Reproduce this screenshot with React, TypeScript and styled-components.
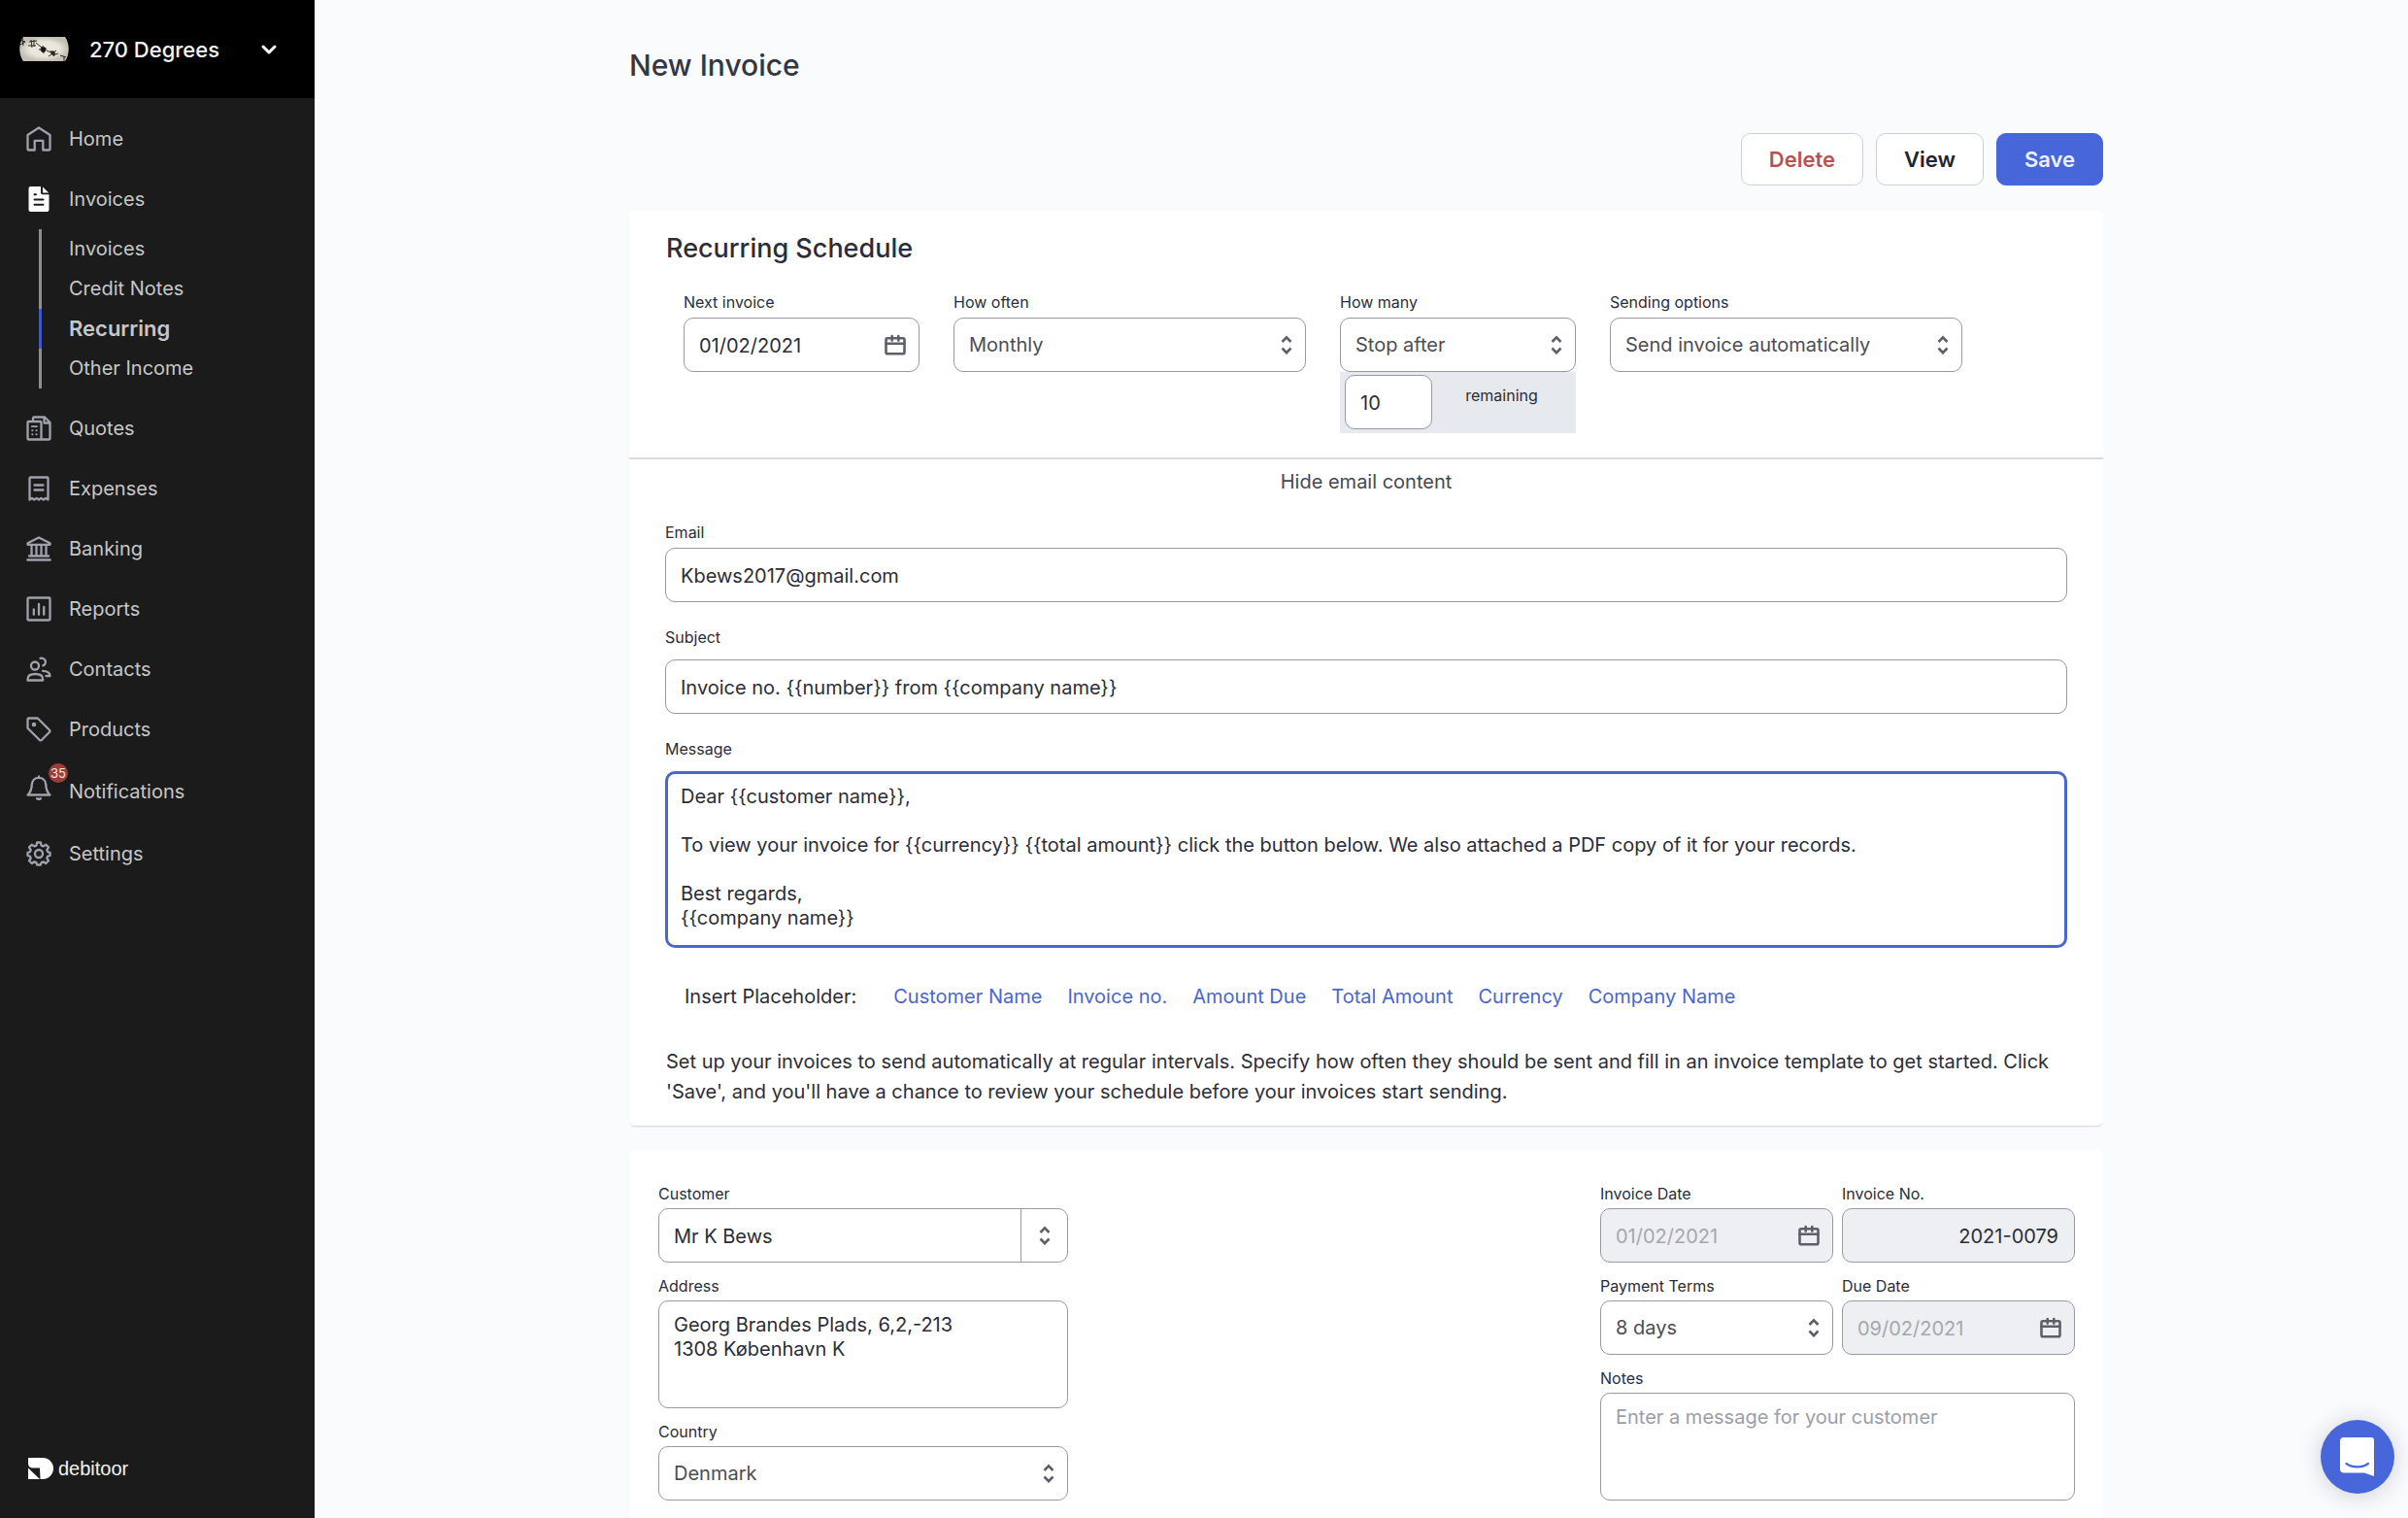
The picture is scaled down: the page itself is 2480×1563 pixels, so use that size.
import React, { useId } from "react";
import styled, { createGlobalStyle, css } from "styled-components";

const color = {
  page: "#fafbfd",
  card: "#ffffff",
  ink: "#2b2d38",
  soft: "#4b4d54",
  line: "#979aa2",
  hairline: "#d9dadc",
  muted: "#a5a7ac",
  blue: "#4766da",
  link: "#4a67cc",
  red: "#b9524f",
  sidebar: "#1b1b1b",
  navText: "#c6c7c8",
  navIcon: "#9fa1ac",
  disabled: "#eeeff2",
};

const GlobalStyle = createGlobalStyle`
  *, *::before, *::after { box-sizing: border-box; }
  body { margin: 0; background: ${color.page}; }
  body, button, input, select, textarea {
    font-family: Inter, "Liberation Sans", sans-serif;
    font-size: 20px;
    color: ${color.ink};
  }
`;

/* ---------- shell ---------- */

const Shell = styled.div`
  display: flex;
  height: 100vh;
  overflow: hidden;
`;

const Sidebar = styled.aside`
  flex: 0 0 324px;
  display: flex;
  flex-direction: column;
  background: ${color.sidebar};
`;

const AccountButton = styled.button`
  display: flex;
  align-items: center;
  gap: 21px;
  height: 101px;
  padding: 0 38px 0 20px;
  border: 0;
  background: #000;
  color: #f4f4f4;
  font-size: 22px;
  font-weight: 500;
  text-align: left;
  svg:last-child { margin-left: auto; }
`;

const Nav = styled.nav`
  flex: 1;
  padding-top: 11px;
`;

const NavLink = styled.a<{ $tall?: boolean }>`
  display: flex;
  align-items: center;
  gap: 18px;
  height: ${(p) => (p.$tall ? 66 : 62)}px;
  padding-left: 27px;
  color: ${color.navText};
  text-decoration: none;
`;

const NavIcon = styled.span<{ $active?: boolean; $raised?: boolean }>`
  position: relative;
  display: flex;
  color: ${(p) => (p.$active ? "#fbfbfd" : color.navIcon)};
  padding-bottom: ${(p) => (p.$raised ? 8 : 0)}px;
`;

const Badge = styled.span`
  position: absolute;
  left: 23px;
  top: -12px;
  width: 20px;
  height: 20px;
  border-radius: 10px;
  background: #9b3d38;
  color: #f6e6e4;
  font-size: 13px;
  line-height: 20px;
  text-align: center;
`;

const SubNav = styled.div`
  display: flex;
  flex-direction: column;
  margin: 0 0 10px 40px;
`;

const SubLink = styled.a<{ $current?: boolean }>`
  border-left: 3px solid ${(p) => (p.$current ? "#4059c0" : "#8f8f8f")};
  padding-left: 28px;
  line-height: 41px;
  height: 41px;
  color: ${color.navText};
  text-decoration: none;
  ${(p) => p.$current && css`font-size: 22px; font-weight: 600;`}
`;

const Brand = styled.div`
  display: flex;
  align-items: center;
  gap: 5px;
  padding: 0 0 37px 29px;
  color: #f2f2f2;
  font-family: "Liberation Sans", Arial, sans-serif;
  line-height: 28px;
`;

/* ---------- content ---------- */

const Main = styled.main`
  flex: 1;
  overflow-y: auto;
  scrollbar-width: none;
  padding: 49px 40px 0 50px;
`;

const Column = styled.div`
  max-width: 1518px;
  margin: 0 auto;
`;

const Title = styled.h1`
  margin: 0 0 52px;
  font-size: 30px;
  line-height: 36px;
  font-weight: 500;
  color: #343643;
`;

const Actions = styled.div`
  display: flex;
  justify-content: flex-end;
  gap: 13px;
  margin-bottom: 26px;
`;

const ActionButton = styled.button<{ $kind: "danger" | "plain" | "primary" }>`
  height: 54px;
  padding: 0 28px;
  border-radius: 10px;
  border: 1px solid #cdd0da;
  background: #fff;
  font-size: 22px;
  font-weight: 600;
  color: ${(p) => (p.$kind === "danger" ? color.red : "#22242e")};
  ${(p) =>
    p.$kind === "primary" &&
    css`
      border-color: ${color.blue};
      background: ${color.blue};
      color: #eef1fd;
    `}
`;

const Card = styled.section`
  margin-bottom: 25px;
  border-radius: 6px;
  background: ${color.card};
  box-shadow: 0 2px 2px -1px rgba(40, 45, 60, 0.2);
`;

const Schedule = styled.div`
  padding: 23px 38px 25px;
  border-bottom: 2px solid ${color.hairline};
`;

const SectionTitle = styled.h2`
  margin: 0 0 29px;
  font-size: 27px;
  line-height: 32px;
  font-weight: 500;
`;

const ScheduleFields = styled.div`
  display: flex;
  align-items: flex-start;
  gap: 35px;
  padding: 0 18px;
`;

const FieldBox = styled.div<{ $gap: number; $basis?: number }>`
  display: flex;
  flex-direction: column;
  gap: ${(p) => p.$gap}px;
  min-width: 0;
  ${(p) => p.$basis && css`flex: 0 1 ${p.$basis}px;`}
`;

const Label = styled.label`
  font-size: 16px;
  line-height: 20px;
`;

const Control = styled.div`
  position: relative;
  display: flex;
  svg {
    position: absolute;
    top: 0;
    bottom: 0;
    right: 14px;
    margin: auto 0;
    color: #5d606b;
    pointer-events: none;
  }
`;

const frame = css`
  width: 100%;
  min-width: 0;
  margin: 0;
  border: 1px solid ${color.line};
  border-radius: 10px;
  background: #fff;
  outline: 0;
`;

const TextInput = styled.input<{ $end?: boolean }>`
  ${frame}
  height: 56px;
  padding: 2px 16px 0 15px;
  text-align: ${(p) => (p.$end ? "right" : "left")};
  &:read-only { background: ${color.disabled}; }
  &:disabled { background: ${color.disabled}; color: ${color.muted}; }
`;

const Select = styled.select`
  ${frame}
  appearance: none;
  height: 56px;
  padding: 0 36px 0 15px;
  color: ${color.soft};
`;

const TextArea = styled.textarea<{ $height: number; $focused?: boolean }>`
  ${frame}
  display: block;
  height: ${(p) => p.$height}px;
  padding: 12px 15px;
  line-height: 25px;
  resize: none;
  &::placeholder { color: #9b9ea7; opacity: 1; }
  ${(p) =>
    p.$focused &&
    css`
      border: 3px solid ${color.link};
      padding: 11px 13px;
    `}
`;

const Remaining = styled.div`
  display: flex;
  align-items: flex-start;
  padding: 3px 5px 4px;
  background: #e6e9ed;
`;

const CountInput = styled(TextInput)`
  flex: 0 0 90px;
  width: 90px;
`;

const RemainingLabel = styled(Label)`
  flex: 1;
  padding-top: 11px;
  text-align: center;
`;

const HideButton = styled.button`
  display: block;
  margin: 11px auto 30px;
  padding: 0;
  border: 0;
  background: none;
  line-height: 24px;
  color: #444853;
`;

const EmailForm = styled.div`
  display: flex;
  flex-direction: column;
  gap: 26px;
  padding: 0 37px;
`;

const Placeholders = styled.div`
  display: flex;
  gap: 26px;
  margin: 38px 0 40px;
  padding: 0 57px;
  line-height: 24px;
`;

const PlaceholderTitle = styled.span`
  margin-right: 12px;
`;

const PlaceholderButton = styled.button`
  padding: 0;
  border: 0;
  background: none;
  line-height: 24px;
  color: ${color.link};
`;

const HelpText = styled.p`
  margin: 0;
  padding: 0 30px 19px 38px;
  line-height: 31px;
`;

const InvoiceCard = styled(Card)`
  display: flex;
  justify-content: space-between;
  padding: 35px 29px 40px 30px;
`;

const CustomerColumn = styled.div`
  flex: 0 1 422px;
  display: flex;
  flex-direction: column;
  gap: 14px;
`;

const DetailsGrid = styled.div`
  flex: 0 1 489px;
  display: grid;
  grid-template-columns: 1fr 1fr;
  gap: 14px 9px;
  align-content: start;
`;

const Wide = styled.div`
  grid-column: 1 / -1;
`;

const Combo = styled.div`
  display: flex;
  height: 56px;
  border: 1px solid ${color.line};
  border-radius: 10px;
  background: #fff;
  overflow: hidden;
`;

const ComboInput = styled.input`
  flex: 1;
  min-width: 0;
  border: 0;
  padding: 2px 15px 0;
  background: none;
  outline: 0;
`;

const ComboButton = styled.button`
  display: flex;
  align-items: center;
  justify-content: center;
  width: 48px;
  padding: 0;
  border: 0;
  border-left: 1px solid ${color.line};
  background: none;
  color: #5d606b;
`;

const ChatButton = styled.button`
  position: fixed;
  right: 14px;
  bottom: 25px;
  display: flex;
  align-items: center;
  justify-content: center;
  width: 76px;
  height: 76px;
  padding: 0;
  border: 0;
  border-radius: 50%;
  background: ${color.blue};
  box-shadow: 0 2px 24px rgba(30, 35, 50, 0.2);
`;

/* ---------- drawings ---------- */

const Glyph = ({ children }: { children: React.ReactNode }) => (
  <svg width="26" height="26" viewBox="0 0 26 26" fill="none" stroke="currentColor" strokeWidth="2.3" strokeLinejoin="round" strokeLinecap="round" aria-hidden="true">
    {children}
  </svg>
);

const HomeIcon = () => (
  <Glyph><path d="M8.7 24.5H2.5a1 1 0 0 1-1-1V9L13 1.500 24.500 9v14.500a1 1 0 0 1-1 1h-6.200v-9.700H8.700z" /></Glyph>
);
const InvoiceIcon = () => (
  <Glyph>
    <path fill="currentColor" stroke="none" d="M4.500 0H15v6.500a1.700 1.700 0 0 0 1.700 1.700h6.800V24a2 2 0 0 1-2 2h-17a2 2 0 0 1-2-2V2a2 2 0 0 1 2-2zM17 .5l6.200 6H17z" />
    <path stroke={color.sidebar} strokeWidth="2" d="M8.500 8.300h1.500M8.500 13.500h9M8.500 18.800h9" />
  </Glyph>
);
const QuoteIcon = () => (
  <Glyph>
    <path d="M7 6V2.500a1 1 0 0 1 1-1h11l5.500 5.500v16.500a1 1 0 0 1-1 1H2.500a1 1 0 0 1-1-1V7a1 1 0 0 1 1-1H14.500a1 1 0 0 1 1 1v17.500M18.500 1.500v6h6" />
    <path strokeWidth="1.800" d="M5.800 11.200h5.200" />
    <path strokeWidth="2" d="M6.300 15.300h.1M10.500 15.300h.1M6.300 19.300h.1M10.500 19.300h.1" />
  </Glyph>
);
const ExpenseIcon = () => (
  <Glyph>
    <path d="M3.500 24.500V2.500a1 1 0 0 1 1-1h17a1 1 0 0 1 1 1v22l-2.400-1.600-2.300 1.600-2.500-1.600-2.300 1.600-2.300-1.600-2.500 1.600-2.300-1.600z" />
    <path d="M8.500 9.500h9M8.500 14.500h9" />
  </Glyph>
);
const BankIcon = () => (
  <Glyph>
    <path d="M1.500 7.200 13 1.500l11.500 5.700v1.600h-23z" />
    <path d="M5.500 9v11M10.500 9v11M15.500 9v11M20.500 9v11M3 20.500h20M1.300 24.500h23.400" />
  </Glyph>
);
const ReportIcon = () => (
  <Glyph>
    <rect x="1.500" y="1.500" width="23" height="23" rx="1" />
    <path d="M7.800 13.500v5.300M13 8v10.800M18.200 11v7.800" />
  </Glyph>
);
const ContactIcon = () => (
  <Glyph>
    <circle cx="9" cy="9.500" r="4" />
    <path d="M1.500 24.500v-1.200c0-3.300 3-5.300 7.800-5.300s7.800 2 7.800 5.300v1.200z" />
    <path d="M14.500 1.900a4 4 0 1 1 2.800 7.500M17 14.800c4.600.1 7.500 1.700 7.500 5.200h-4" />
  </Glyph>
);
const ProductIcon = () => (
  <Glyph>
    <path d="M1.500 2.500a1 1 0 0 1 1-1h9.300L24 13.700a1.400 1.400 0 0 1 0 2L15.800 24a1.400 1.400 0 0 1-2 0L1.500 11.800z" />
    <circle cx="8" cy="8" r="2.300" fill="currentColor" stroke="none" />
  </Glyph>
);
const BellIcon = () => (
  <Glyph>
    <path d="M13 1.500v1.200M13 2.800c4.300 0 7 3 7.200 6.800.2 5.500 1 8 4.300 10.900h-23C4.800 17.600 5.600 15.100 5.800 9.600 6 5.800 8.700 2.800 13 2.800z" />
    <path strokeWidth="2.500" d="M11.200 24.200c1 .7 2.600.7 3.600 0" />
  </Glyph>
);
const GearIcon = () => (
  <Glyph>
    <circle cx="13" cy="13" r="4" />
    <path d="M11.100 1.500h3.800l.7 3.100 2 .8 2.700-1.700 2.700 2.700-1.700 2.700.8 2 2.400.7v3.100l-2.400.7-.8 2 1.700 2.700-2.700 2.700-2.700-1.700-2 .8-.7 2.400h-3.800l-.7-2.400-2-.8-2.700 1.700L3 20.300l1.700-2.700-.8-2-2.400-.7v-3.100l2.400-.7.8-2L3 6.400l2.700-2.700 2.700 1.700 2-.8z" />
  </Glyph>
);

const Sorter = () => (
  <svg width="12" height="20" viewBox="0 0 12 20" fill="none" stroke="currentColor" strokeWidth="2.600" aria-hidden="true">
    <path d="m1.500 7 4.500-4.700L10.500 7M1.500 13.500 6 18.200l4.500-4.700" />
  </svg>
);

const Calendar = () => (
  <svg width="22" height="22" viewBox="0 0 22 22" fill="none" stroke="currentColor" strokeWidth="2.600" strokeLinecap="round" aria-hidden="true">
    <rect x="1.500" y="4.300" width="19" height="16" rx="1.500" />
    <path d="M1.500 9.800h19M7.700 2v4.600M14.300 2v4.600" />
  </svg>
);

const Avatar = () => (
  <svg width="51" height="25" viewBox="0 0 51 25" aria-hidden="true">
    <defs>
      <radialGradient id="sky"><stop offset="60%" stopColor="#e9e6dc" /><stop offset="100%" stopColor="#c3bfb2" /></radialGradient>
      <clipPath id="lens"><path d="M4 0h43c5 7 5 18 0 25H4C-1 18-1 7 4 0z" /></clipPath>
    </defs>
    <g clipPath="url(#lens)">
      <rect width="51" height="25" fill="url(#sky)" />
      <g stroke="#2a2823" strokeWidth="1" fill="none">
        <path d="M0 3l6 2M3 1l1 8M1 8l5-3M10 5l8-1M9 9l8 0M12 3l1 8M15 3l0 7M17 6l6 5M20 13l8-1M24 9l1 8M28 14l9 4M30 20l8-6M32 14l4 6M34 19l6-2M42 19l6 2M46 20l0 5" />
        <circle cx="24.500" cy="13" r="2.500" fill="#15140f" />
        <circle cx="34.500" cy="16.500" r="1.800" fill="#2a2823" />
      </g>
    </g>
  </svg>
);

const AccountChevron = () => (
  <svg width="18" height="12" viewBox="0 0 18 12" fill="none" stroke="#fff" strokeWidth="3" strokeLinecap="round" strokeLinejoin="round" aria-hidden="true">
    <path d="m3 3 6 6 6-6" />
  </svg>
);

const Logo = () => (
  <svg width="26" height="22" viewBox="0 0 26 22" aria-hidden="true">
    <path fill="#fff" d="M0 0h15a11 11 0 0 1 0 22h-2.500L12 10.500H4.500A4.500 4.500 0 0 1 0 6z" />
    <path fill="#fff" d="M0 10.500 12 22H0z" />
  </svg>
);

const ChatIcon = () => (
  <svg width="36" height="40" viewBox="0 0 36 40" aria-hidden="true">
    <path fill="#fff" d="M4 0h28a3 3 0 0 1 3 3v37l-10-3.500H4a4 4 0 0 1-4-4V4a4 4 0 0 1 4-4z" />
    <path fill="none" stroke={color.blue} strokeWidth="2.200" strokeLinecap="round" d="M6.500 27c6.500 4.500 16 4.500 22.500 0" />
  </svg>
);

/* ---------- form parts ---------- */

type FieldProps = {
  label: string;
  gap?: number;
  basis?: number;
  after?: React.ReactNode;
  children: (id: string) => React.ReactNode;
};

const Field = ({ label, gap = 5, basis, after, children }: FieldProps) => {
  const id = useId();
  return (
    <FieldBox $gap={gap} $basis={basis}>
      <Label htmlFor={id}>{label}</Label>
      <div>
        <Control>{children(id)}</Control>
        {after}
      </div>
    </FieldBox>
  );
};

const options = (values: string[]) => values.map((v) => <option key={v}>{v}</option>);

const message = `Dear {{customer name}},

To view your invoice for {{currency}} {{total amount}} click the button below. We also attached a PDF copy of it for your records.

Best regards,
{{company name}}`;

const mainLinks = [
  { text: "Quotes", Icon: QuoteIcon },
  { text: "Expenses", Icon: ExpenseIcon },
  { text: "Banking", Icon: BankIcon },
  { text: "Reports", Icon: ReportIcon },
  { text: "Contacts", Icon: ContactIcon },
  { text: "Products", Icon: ProductIcon },
];

const subLinks = ["Invoices", "Credit Notes", "Recurring", "Other Income"];

const placeholders = ["Customer Name", "Invoice no.", "Amount Due", "Total Amount", "Currency", "Company Name"];

export default function App() {
  return (
    <Shell>
      <GlobalStyle />
      <Sidebar>
        <AccountButton type="button">
          <Avatar />
          <span>270 Degrees</span>
          <AccountChevron />
        </AccountButton>
        <Nav>
          <NavLink href="#home"><NavIcon><HomeIcon /></NavIcon>Home</NavLink>
          <NavLink href="#invoices"><NavIcon $active><InvoiceIcon /></NavIcon>Invoices</NavLink>
          <SubNav>
            {subLinks.map((text) => (
              <SubLink key={text} href="#invoices" $current={text === "Recurring"}>{text}</SubLink>
            ))}
          </SubNav>
          {mainLinks.map(({ text, Icon }) => (
            <NavLink key={text} href="#section"><NavIcon><Icon /></NavIcon>{text}</NavLink>
          ))}
          <NavLink href="#notifications" $tall>
            <NavIcon $raised><BellIcon /><Badge>35</Badge></NavIcon>Notifications
          </NavLink>
          <NavLink href="#settings"><NavIcon><GearIcon /></NavIcon>Settings</NavLink>
        </Nav>
        <Brand><Logo />debitoor</Brand>
      </Sidebar>

      <Main>
        <Column>
          <Title>New Invoice</Title>
          <Actions>
            <ActionButton type="button" $kind="danger">Delete</ActionButton>
            <ActionButton type="button" $kind="plain">View</ActionButton>
            <ActionButton type="button" $kind="primary">Save</ActionButton>
          </Actions>

          <Card>
            <Schedule>
              <SectionTitle>Recurring Schedule</SectionTitle>
              <ScheduleFields>
                <Field label="Next invoice" gap={6} basis={243}>
                  {(id) => <><TextInput id={id} defaultValue="01/02/2021" /><Calendar /></>}
                </Field>
                <Field label="How often" gap={6} basis={363}>
                  {(id) => <><Select id={id}>{options(["Monthly"])}</Select><Sorter /></>}
                </Field>
                <Field
                  label="How many"
                  gap={6}
                  basis={243}
                  after={
                    <Remaining>
                      <CountInput id="remaining" defaultValue="10" />
                      <RemainingLabel htmlFor="remaining">remaining</RemainingLabel>
                    </Remaining>
                  }
                >
                  {(id) => <><Select id={id}>{options(["Stop after"])}</Select><Sorter /></>}
                </Field>
                <Field label="Sending options" gap={6} basis={363}>
                  {(id) => <><Select id={id}>{options(["Send invoice automatically"])}</Select><Sorter /></>}
                </Field>
              </ScheduleFields>
            </Schedule>

            <HideButton type="button">Hide email content</HideButton>
            <EmailForm>
              <Field label="Email" gap={6}>
                {(id) => <TextInput id={id} defaultValue="Kbews2017@gmail.com" />}
              </Field>
              <Field label="Subject" gap={13}>
                {(id) => <TextInput id={id} defaultValue="Invoice no. {{number}} from {{company name}}" />}
              </Field>
              <Field label="Message" gap={13}>
                {(id) => <TextArea id={id} $height={182} $focused defaultValue={message} />}
              </Field>
            </EmailForm>
            <Placeholders>
              <PlaceholderTitle>Insert Placeholder:</PlaceholderTitle>
              {placeholders.map((text) => (
                <PlaceholderButton key={text} type="button">{text}</PlaceholderButton>
              ))}
            </Placeholders>
            <HelpText>
              Set up your invoices to send automatically at regular intervals. Specify how often they should be sent
              and fill in an invoice template to get started. Click 'Save', and you'll have a chance to review your
              schedule before your invoices start sending.
            </HelpText>
          </Card>

          <InvoiceCard>
            <CustomerColumn>
              <FieldBox $gap={5}>
                <Label htmlFor="customer">Customer</Label>
                <Combo>
                  <ComboInput id="customer" defaultValue="Mr K Bews" />
                  <ComboButton type="button" aria-label="Choose customer"><Sorter /></ComboButton>
                </Combo>
              </FieldBox>
              <Field label="Address">
                {(id) => <TextArea id={id} $height={111} defaultValue={"Georg Brandes Plads, 6,2,-213\n1308 København K"} />}
              </Field>
              <Field label="Country">
                {(id) => <><Select id={id}>{options(["Denmark"])}</Select><Sorter /></>}
              </Field>
            </CustomerColumn>

            <DetailsGrid>
              <Field label="Invoice Date">
                {(id) => <><TextInput id={id} disabled defaultValue="01/02/2021" /><Calendar /></>}
              </Field>
              <Field label="Invoice No.">
                {(id) => <TextInput id={id} $end readOnly defaultValue="2021-0079" />}
              </Field>
              <Field label="Payment Terms">
                {(id) => <><Select id={id}>{options(["8 days"])}</Select><Sorter /></>}
              </Field>
              <Field label="Due Date">
                {(id) => <><TextInput id={id} disabled defaultValue="09/02/2021" /><Calendar /></>}
              </Field>
              <Wide>
                <Field label="Notes">
                  {(id) => <TextArea id={id} $height={111} placeholder="Enter a message for your customer" />}
                </Field>
              </Wide>
            </DetailsGrid>
          </InvoiceCard>
        </Column>
      </Main>

      <ChatButton type="button" aria-label="Open chat"><ChatIcon /></ChatButton>
    </Shell>
  );
}
